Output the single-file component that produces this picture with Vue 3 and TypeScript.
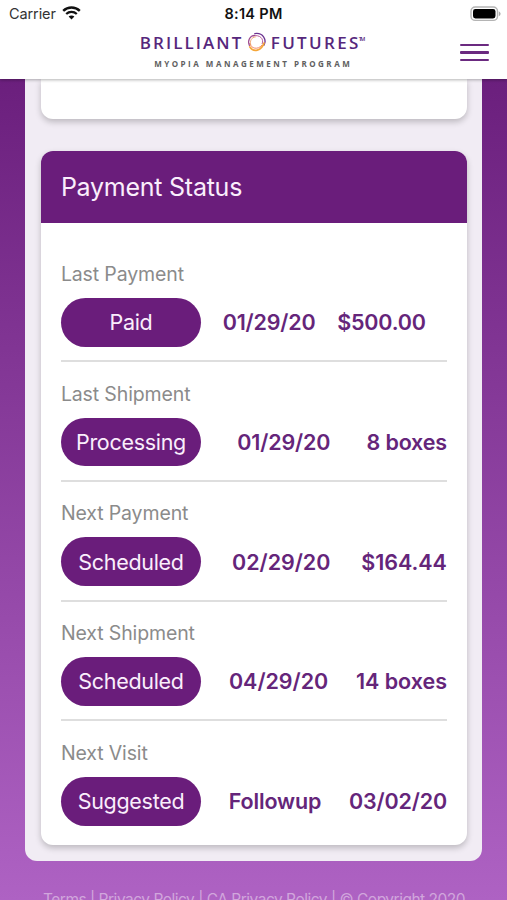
<script setup lang="ts">
interface StatusRow {
  label: string
  status: string
  first: string
  second: string
  kind: string
}

const rows: StatusRow[] = [
  { label: 'Last Payment', status: 'Paid', first: '01/29/20', second: '$500.00', kind: 'paid' },
  { label: 'Last Shipment', status: 'Processing', first: '01/29/20', second: '8 boxes', kind: 'processing' },
  { label: 'Next Payment', status: 'Scheduled', first: '02/29/20', second: '$164.44', kind: 'scheduled' },
  { label: 'Next Shipment', status: 'Scheduled', first: '04/29/20', second: '14 boxes', kind: 'scheduled' },
  { label: 'Next Visit', status: 'Suggested', first: 'Followup', second: '03/02/20', kind: 'suggested' },
]
</script>

<template>
  <div class="page">
    <header class="top">
      <div class="statusbar">
        <div class="carrier">
          <span>Carrier</span>
          <svg class="wifi" width="19" height="14" viewBox="0 0 19 14">
            <path d="M1.2 4.8C5.9 .5 13.1 .5 17.8 4.8" fill="none" stroke="#111" stroke-width="2.5" />
            <path d="M4.2 8C7.2 5.2 11.8 5.2 14.8 8" fill="none" stroke="#111" stroke-width="2.3" />
            <path d="M6.6 10.5C8.2 9 10.8 9 12.4 10.5L9.5 13.6Z" fill="#111" />
          </svg>
        </div>
        <div class="clock">8:14 PM</div>
        <svg class="battery" width="31" height="16" viewBox="0 0 31 16">
          <rect x="1" y="1" width="26.5" height="13.4" rx="4.2" fill="#fff" stroke="#b4b4b4" stroke-width="1.4" />
          <rect x="3" y="3" width="22.5" height="9.4" rx="2.4" fill="#000" />
          <path d="M28.8 5.2Q30.6 6.2 30.6 7.7T28.8 10.2Z" fill="#aaa" />
        </svg>
      </div>
      <div class="navbar">
        <svg class="logo" width="230" height="40" viewBox="0 0 230 40">
          <g font-family="'Open Sans', sans-serif" fill="#56277c">
            <text x="1.8" y="17.4" font-size="17" font-weight="600" textLength="101.5" lengthAdjust="spacing">BRILLIANT</text>
            <text x="132.8" y="17.4" font-size="17" font-weight="600" textLength="87.5" lengthAdjust="spacing">FUTURES</text>
            <text x="220.8" y="9" font-size="5.5" font-weight="600" textLength="6.5">TM</text>
            <text x="16.2" y="34.9" font-size="8" font-weight="700" fill="#606060" textLength="195.5" lengthAdjust="spacing">MYOPIA MANAGEMENT PROGRAM</text>
          </g>
          <g fill="none" stroke-linecap="round" transform="translate(.8 -.3)">
            <path d="M116 1.9C124 .6 128.4 8 125 13.6" stroke="#6a3190" stroke-width="1.3" />
            <path d="M114.5 4.1C121 2.8 125.5 7 123.4 12" stroke="#b04b8f" stroke-width=".9" />
            <path d="M125.2 11.4C122.7 19.4 114.5 20.9 111 15.2" stroke="#f5a638" stroke-width="1.8" />
            <path d="M122.9 13.7C119.2 18.4 112.2 17.2 111 11.7" stroke="#ee7955" stroke-width=".9" />
            <path d="M110.6 13.7C108.4 9 111 4 116 3.7" stroke="#9c4a91" stroke-width="1.2" />
            <path d="M112 13.3C110.8 9.3 112.3 5.7 116.6 5.2" stroke="#ed995b" stroke-width=".8" />
          </g>
        </svg>
        <div class="menu"><i></i><i></i><i></i></div>
      </div>
    </header>

    <main class="panel">
      <section class="card previous"></section>
      <section class="card">
        <h2 class="title"><span>Payment Status</span></h2>
        <div class="rows">
          <div v-for="row in rows" :key="row.label" class="row" :class="row.kind">
            <div class="label">{{ row.label }}</div>
            <div class="line">
              <span class="pill">{{ row.status }}</span>
              <span class="value">{{ row.first }}</span>
              <span class="value">{{ row.second }}</span>
            </div>
          </div>
        </div>
      </section>
    </main>

    <footer class="footer">Terms | Privacy Policy | CA Privacy Policy | © Copyright 2020</footer>
  </div>
</template>

<style>
body {
  overflow: hidden;
}
</style>

<style scoped>
.page {
  box-sizing: border-box;
  width: 507px;
  height: 900px;
  overflow: hidden;
  background: linear-gradient(#6b1f7d 79px, #ae62c3 900px);
  font-family: Inter, "Liberation Sans", sans-serif;
}
.top {
  position: relative;
  z-index: 1;
  height: 79px;
  background: #fff;
  box-shadow: 0 1px 3px rgba(0, 0, 0, 0.3);
}
.statusbar {
  display: grid;
  grid-template-columns: 1fr auto 1fr;
  align-items: center;
  height: 28px;
  padding: 0 6px 0 9px;
}
.carrier {
  display: flex;
  align-items: center;
  gap: 6px;
  margin-top: -1px;
  font-size: 14.5px;
  letter-spacing: -0.1px;
  color: #333;
}
.wifi {
  margin-top: -1px;
}
.clock {
  margin: -1px 3px 0 0;
  font-size: 14.5px;
  font-weight: 600;
  letter-spacing: 0.3px;
  color: #111;
}
.battery {
  justify-self: end;
  margin-top: -1px;
}
.navbar {
  display: flex;
  justify-content: space-between;
  padding: 4px 18px 0 138px;
}
.logo {
  display: block;
}
.menu {
  display: flex;
  flex-direction: column;
  gap: 5px;
  padding-top: 12px;
}
.menu i {
  width: 29px;
  height: 2.3px;
  border-radius: 1px;
  background: #6b2a80;
}
.panel {
  box-sizing: border-box;
  height: 782px;
  margin: 0 24.6px 0 25.4px;
  padding: 0 15.5px;
  border-radius: 0 0 12px 12px;
  background: #f1ecf4;
}
.card {
  border-radius: 12px;
  background: #fff;
  box-shadow: 0 3px 6px rgba(0, 0, 0, 0.22);
}
.previous {
  height: 40.4px;
  margin-bottom: 32px;
  border-radius: 0 0 12px 12px;
}
.title {
  display: flex;
  align-items: center;
  height: 71.8px;
  margin: 0;
  padding: 0 20px;
  border-radius: 12px 12px 0 0;
  background: #6a1d7b;
  color: #faeefc;
  font-size: 25px;
  font-weight: 400;
  letter-spacing: -0.25px;
}
.rows {
  padding: 19.3px 20px 3.3px;
}
.row {
  box-sizing: border-box;
  height: 119.75px;
  padding-top: 19.5px;
  border-bottom: 2px solid #dedede;
}
.row:last-child {
  border-bottom-color: transparent;
}
.label {
  height: 24px;
  margin-bottom: 11.9px;
  line-height: 25px;
  font-size: 19.5px;
  letter-spacing: -0.13px;
  color: #8b8b8b;
}
.line {
  display: flex;
  align-items: center;
  justify-content: space-between;
}
.paid .line {
  padding-right: 21px;
}
.pill {
  display: flex;
  align-items: center;
  justify-content: center;
  width: 140.2px;
  height: 48.7px;
  border-radius: 25px;
  background: #6a1d7b;
  color: #faeefc;
  font-size: 21.5px;
  letter-spacing: -0.3px;
}
.value {
  color: #65257a;
  font-size: 21.5px;
  font-weight: 600;
  letter-spacing: -0.17px;
}
.scheduled .value {
  letter-spacing: -0.04px;
}
.footer {
  padding: 28px 0 0 43px;
  line-height: 22px;
  font-size: 15.5px;
  letter-spacing: -0.49px;
  white-space: nowrap;
  color: #d1a6dc;
}
</style>
